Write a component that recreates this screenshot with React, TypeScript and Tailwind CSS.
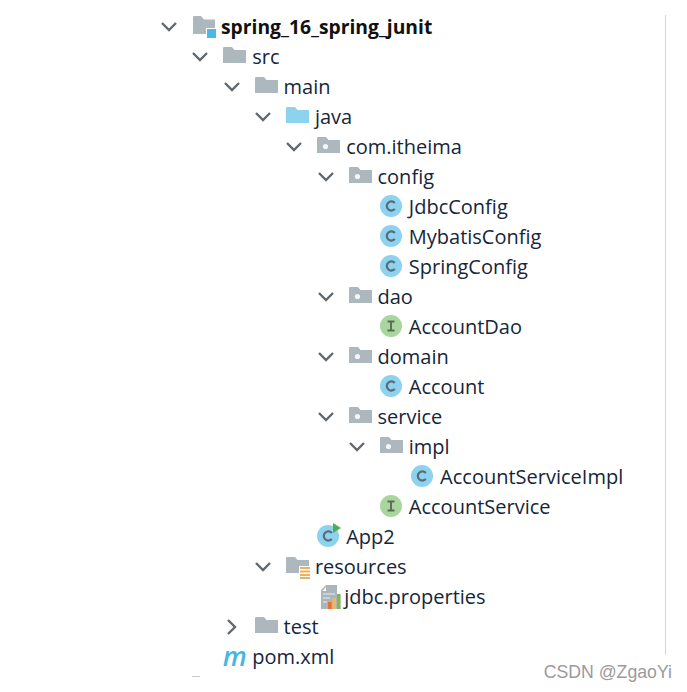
import React from "react";

type Kind = "module" | "folder" | "java" | "pkg" | "c" | "i" | "app" | "res" | "props" | "m";
type Row = { level: number; arrow?: "down" | "right"; kind: Kind; label: string; bold?: boolean };

const rows: Row[] = [
  { level: 0, arrow: "down", kind: "module", label: "spring_16_spring_junit", bold: true },
  { level: 1, arrow: "down", kind: "folder", label: "src" },
  { level: 2, arrow: "down", kind: "folder", label: "main" },
  { level: 3, arrow: "down", kind: "java", label: "java" },
  { level: 4, arrow: "down", kind: "pkg", label: "com.itheima" },
  { level: 5, arrow: "down", kind: "pkg", label: "config" },
  { level: 6, kind: "c", label: "JdbcConfig" },
  { level: 6, kind: "c", label: "MybatisConfig" },
  { level: 6, kind: "c", label: "SpringConfig" },
  { level: 5, arrow: "down", kind: "pkg", label: "dao" },
  { level: 6, kind: "i", label: "AccountDao" },
  { level: 5, arrow: "down", kind: "pkg", label: "domain" },
  { level: 6, kind: "c", label: "Account" },
  { level: 5, arrow: "down", kind: "pkg", label: "service" },
  { level: 6, arrow: "down", kind: "pkg", label: "impl" },
  { level: 7, kind: "c", label: "AccountServiceImpl" },
  { level: 6, kind: "i", label: "AccountService" },
  { level: 4, kind: "app", label: "App2" },
  { level: 3, arrow: "down", kind: "res", label: "resources" },
  { level: 4, kind: "props", label: "jdbc.properties" },
  { level: 2, arrow: "right", kind: "folder", label: "test" },
  { level: 1, kind: "m", label: "pom.xml" },
];

function Icon({ kind }: { kind: Kind }) {
  if (kind === "c" || kind === "i" || kind === "app") {
    const fill = kind === "i" ? "#a8d69e" : "#8dd2ee";
    return (
      <svg width="26" height="26" viewBox="0 0 26 26" className="overflow-visible">
        <circle cx="13" cy="12" r="11" fill={fill} />
        {kind === "i" ? (
          <path d="M9.5 7.5 H16.5 M13 7.5 V16.5 M9.5 16.5 H16.5" fill="none" stroke="#5d6a5a" strokeWidth="1.9" />
        ) : (
          <path d="M16.8 8.9 A4.6 4.6 0 1 0 16.8 15.1" fill="none" stroke="#5b6b77" strokeWidth="2.2" />
        )}
        {kind === "app" && <path d="M18 -1 L26 4 L18 9 Z" fill="#4cb050" />}
      </svg>
    );
  }
  if (kind === "props") {
    return (
      <svg width="28" height="26" viewBox="0 0 28 26">
        <path d="M11 1 H22 V25 H6 V6 Z" fill="#aab5bc" />
        <path d="M11 3 V7 H7.5 Z" fill="#fff" />
        <path d="M8 10 H20 M8 14 H15 M8 18 H12" stroke="#d3dadd" strokeWidth="1.3" />
        <rect x="13" y="18" width="3.6" height="7" fill="#ee6e35" />
        <rect x="17.5" y="14" width="3.6" height="11" fill="#f0b85a" />
        <rect x="22" y="10" width="3.6" height="15" fill="#84b55a" />
      </svg>
    );
  }
  if (kind === "m") {
    return (
      <span className="block w-[27px] text-center text-[27px] leading-[26px] italic font-semibold text-[#45b6e6] -mt-[3px]">
        m
      </span>
    );
  }
  const fill = kind === "java" ? "#8ed3ee" : "#acb7be";
  return (
    <svg width="28" height="24" viewBox="0 0 28 24">
      {kind === "module" ? (
        <path d="M3 2 Q3 1 4 1 H11 L14 4.5 H25 V19 H3 Z" fill={fill} />
      ) : (
        <path d="M2 3 Q2 2 3 2 H11 L13.5 5 H25 V18 H2 Z" fill={fill} />
      )}
      {kind === "pkg" && <circle cx="10.5" cy="11.5" r="2.6" fill="#f4f6f7" />}
      {kind === "module" && <rect x="16.5" y="13.5" width="10" height="10" fill="#4cb9e4" stroke="#fff" strokeWidth="1" />}
      {kind === "res" && (
        <g>
          <rect x="15" y="11" width="12" height="13" fill="#fff" />
          <path d="M16 13 H26 M16 16.5 H26 M16 20 H26 M16 23 H26" stroke="#e9b261" strokeWidth="2" />
        </g>
      )}
    </svg>
  );
}

function Arrow({ dir }: { dir?: "down" | "right" }) {
  if (!dir) return <span className="w-[18px]" />;
  return (
    <svg width="18" height="18" viewBox="0 0 18 18" fill="none" stroke="#62686c" strokeWidth="2.4">
      {dir === "down" ? <path d="M2 5 L9 12 L16 5" /> : <path d="M5 2 L12 9 L5 16" />}
    </svg>
  );
}

export default function App() {
  return (
    <div className="h-[692px] w-[687px] overflow-hidden bg-white [font-family:'Open_Sans',sans-serif]">
      <div className="flex items-start pt-3">
        <div className="w-[665px] text-[20px] text-[#16263a]">
          {rows.map((r, i) => (
            <div key={i} className="flex h-[30px] items-center" style={{ paddingLeft: 160 + r.level * 31.3 }}>
              <Arrow dir={r.arrow} />
              <span className={r.kind === "props" ? "ml-[12px] flex w-[29px] shrink-0 items-center" : "ml-[12px] flex w-[31px] shrink-0 items-center"}>
                <Icon kind={r.kind} />
              </span>
              <span className={r.bold ? "whitespace-nowrap text-[19.3px] font-bold text-[#111]" : "whitespace-nowrap"}>
                {r.label}
              </span>
            </div>
          ))}
        </div>
        <div className="mt-[3px] h-[640px] w-px bg-[#d4d4d4]" />
      </div>
      <div className="-mt-[9px] flex items-start justify-between pr-[15px]">
        <div className="ml-[192px] mt-[13px] h-px w-2 bg-[#c4ccd1]" />
        <span className="text-[17.7px] leading-[18px] text-[#9a9a9a] [font-family:'Liberation_Sans',sans-serif]">
          CSDN @ZgaoYi
        </span>
      </div>
    </div>
  );
}
